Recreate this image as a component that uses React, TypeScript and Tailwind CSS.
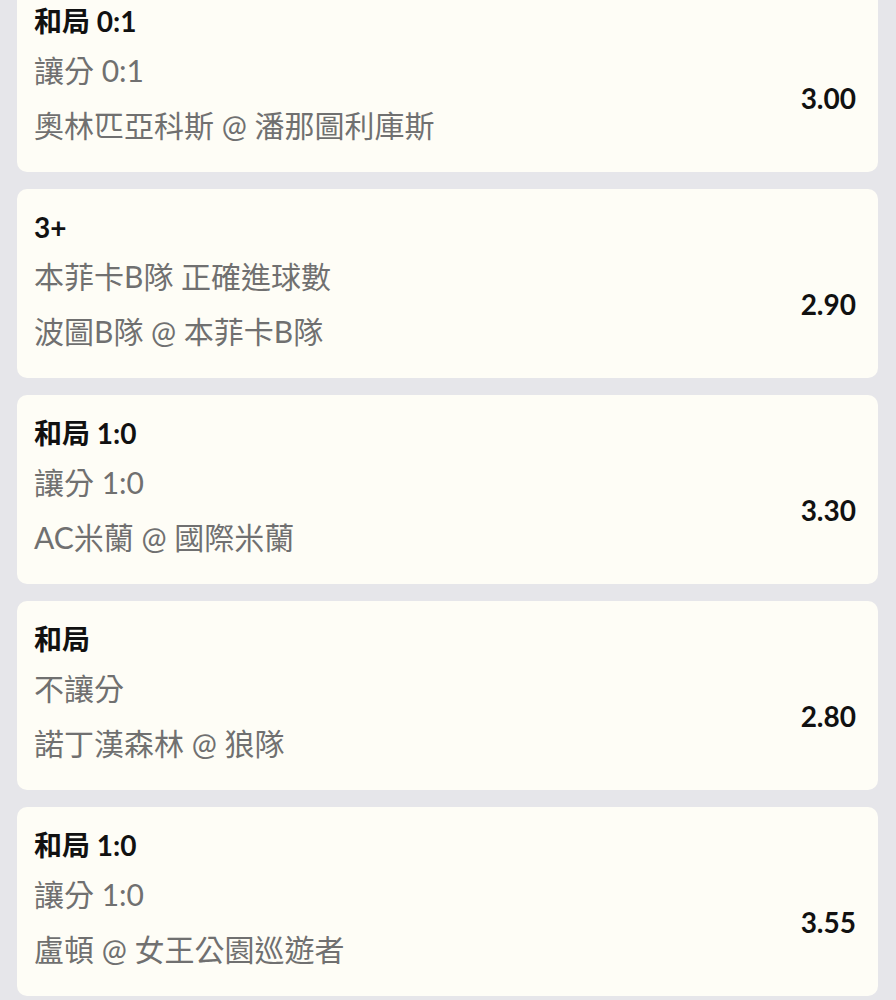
import React from "react";

type Item = { title: string; sub: string; match: string; odds: string };

const items: Item[] = [
  { title: "和局 0:1", sub: "讓分 0:1", match: "奧林匹亞科斯 @ 潘那圖利庫斯", odds: "3.00" },
  { title: "3+", sub: "本菲卡B隊 正確進球數", match: "波圖B隊 @ 本菲卡B隊", odds: "2.90" },
  { title: "和局 1:0", sub: "讓分 1:0", match: "AC米蘭 @ 國際米蘭", odds: "3.30" },
  { title: "和局", sub: "不讓分", match: "諾丁漢森林 @ 狼隊", odds: "2.80" },
  { title: "和局 1:0", sub: "讓分 1:0", match: "盧頓 @ 女王公園巡遊者", odds: "3.55" },
];

export default function App() {
  return (
    <div
      className="min-h-[1000px] w-[896px] overflow-hidden bg-[#e6e6ea]"
      style={{ fontFamily: 'Lato, "Noto Sans CJK TC", sans-serif' }}
    >
      <div className="-mt-[17px] flex flex-col gap-[17px] pl-[17px] pr-[18px]">
        {items.map((it, i) => (
          <div key={i} className="rounded-[10px] bg-[#fefdf6] pl-[17px] pr-[22px] pt-[20px] pb-[27px]">
            <div className="text-[28px] font-bold leading-[36px] text-[#111111]">{it.title}</div>
            <div className="mt-[11px] flex items-center justify-between">
              <div className="flex flex-col gap-[15px] text-[30px] leading-[40px] text-[#707070]">
                <div>{it.sub}</div>
                <div>{it.match}</div>
              </div>
              <div className="text-[28px] font-bold text-[#111111]">{it.odds}</div>
            </div>
          </div>
        ))}
      </div>
    </div>
  );
}
